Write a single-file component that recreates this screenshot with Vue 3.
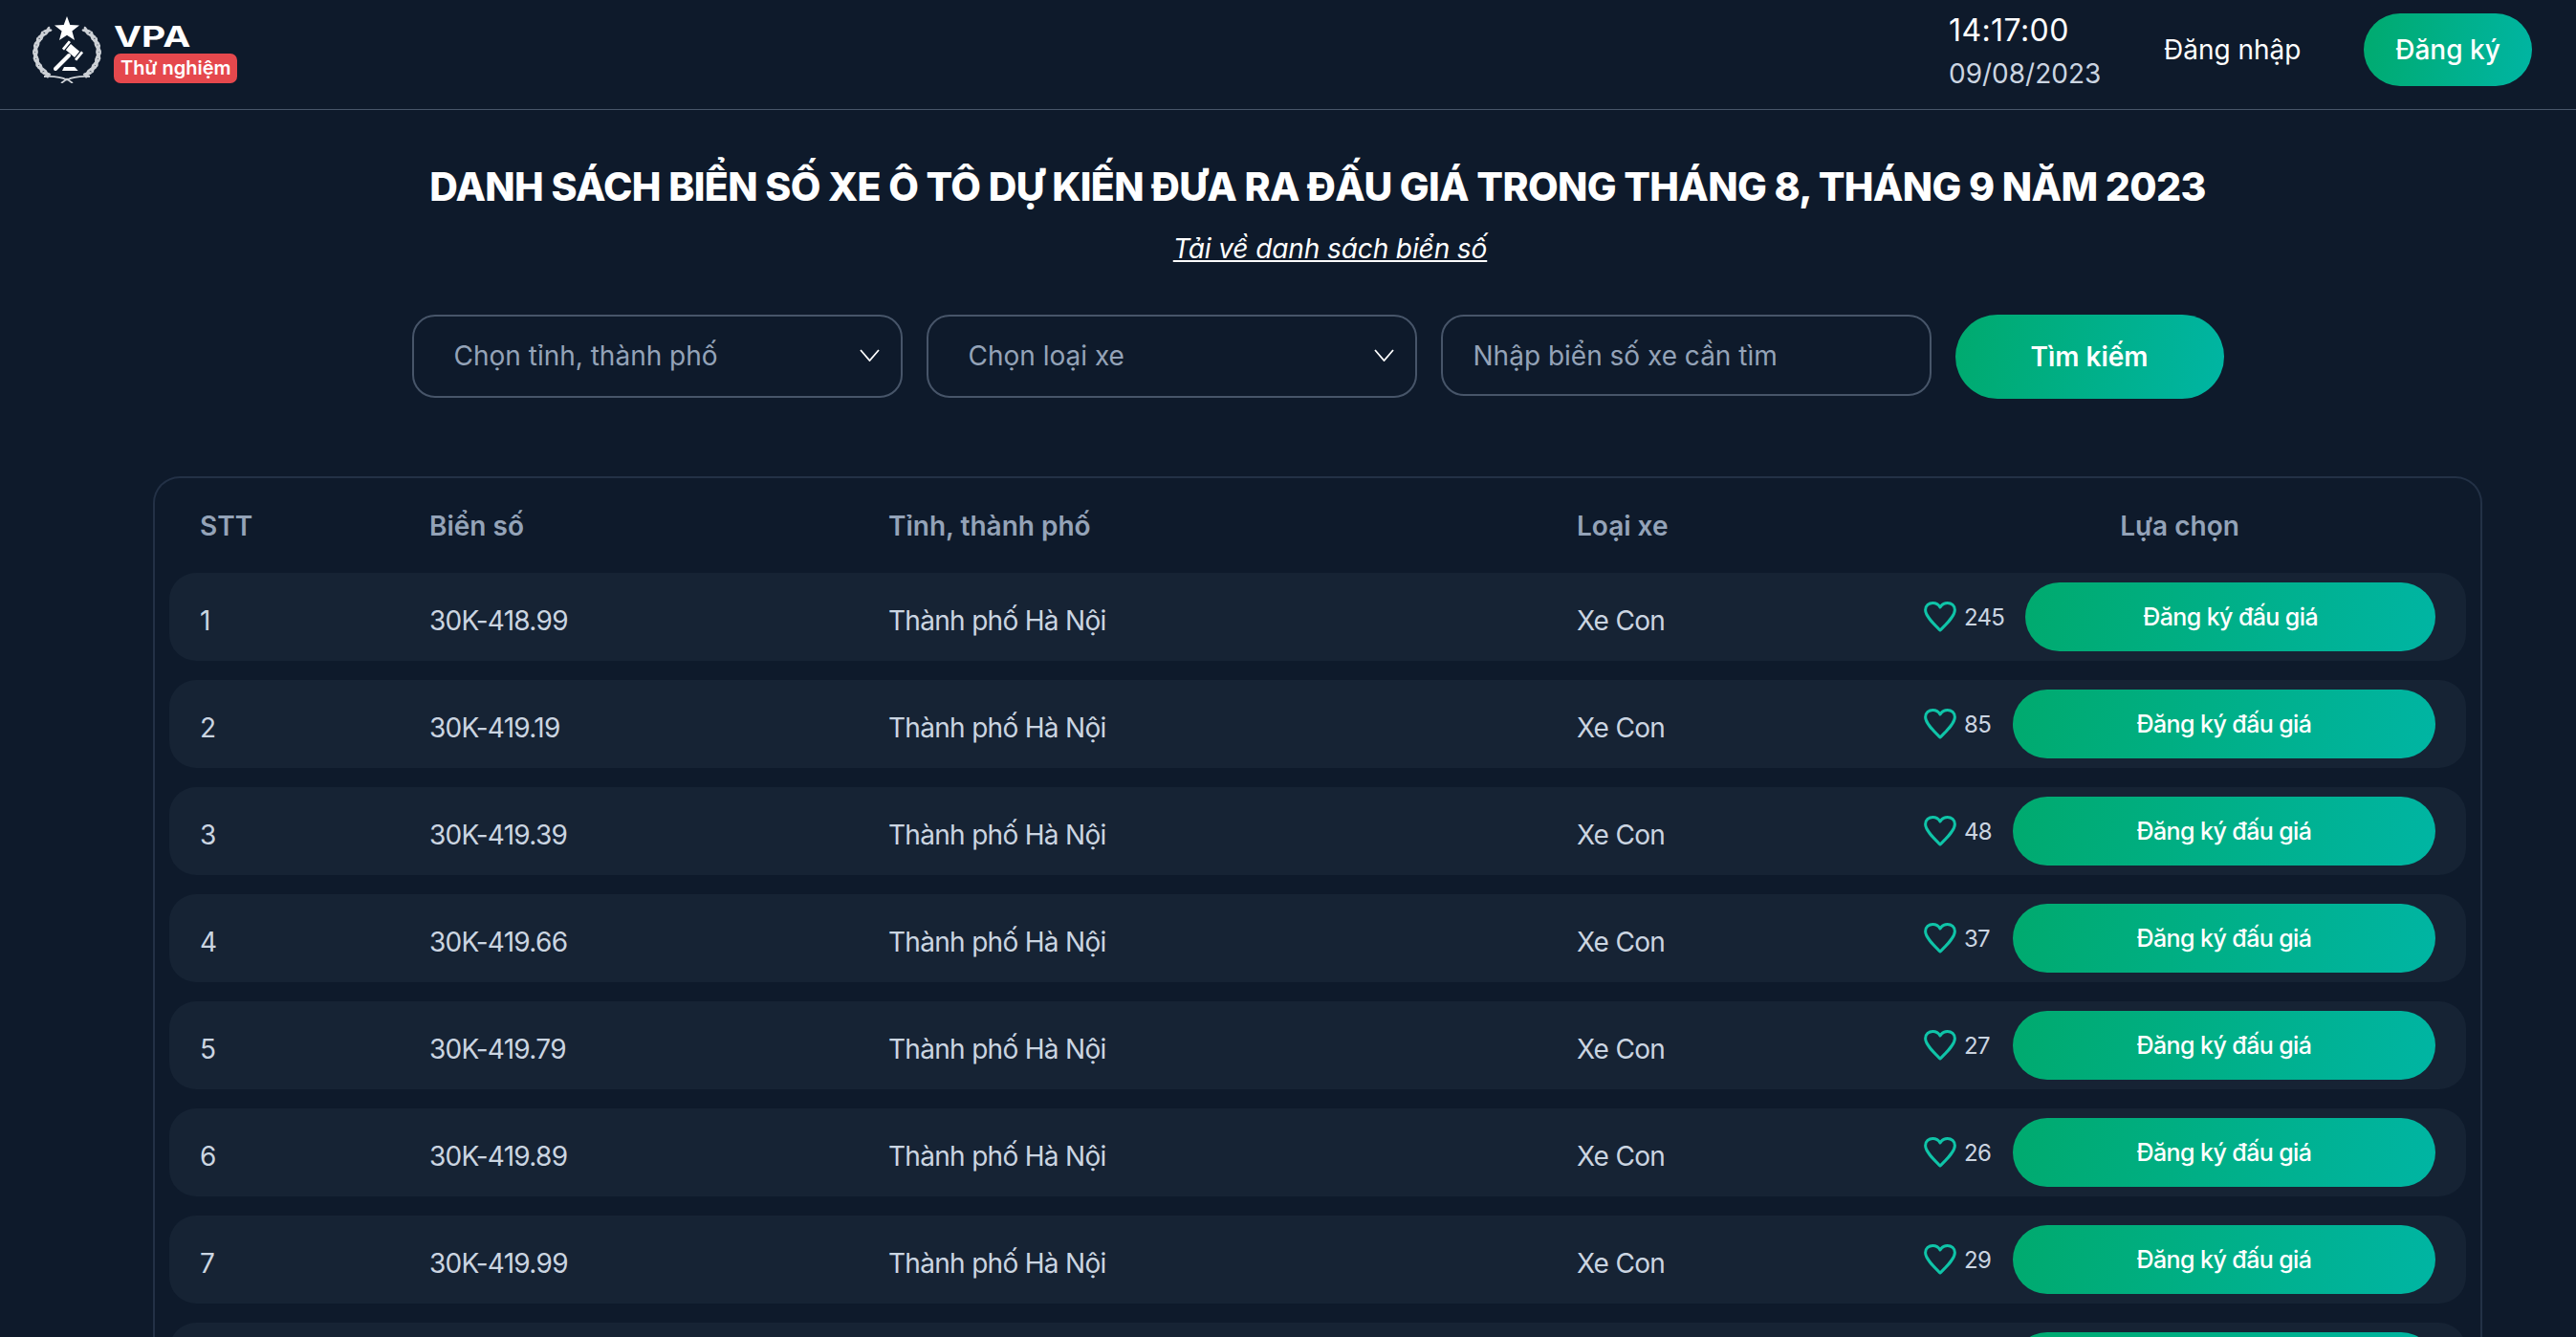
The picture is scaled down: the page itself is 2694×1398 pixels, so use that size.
<script setup>
const rows = [
  { n: 1, plate: '30K-418.99', likes: 245 },
  { n: 2, plate: '30K-419.19', likes: 85 },
  { n: 3, plate: '30K-419.39', likes: 48 },
  { n: 4, plate: '30K-419.66', likes: 37 },
  { n: 5, plate: '30K-419.79', likes: 27 },
  { n: 6, plate: '30K-419.89', likes: 26 },
  { n: 7, plate: '30K-419.99', likes: 29 },
]
// laurel leaves: pairs placed along the left arc of the wreath
const leaves = []
for (let i = 0; i < 8; i++) {
  const deg = 128 + i * 14.5
  const a = (deg * Math.PI) / 180
  const x = 37 + 33 * Math.cos(a)
  const y = 38 - 29 * Math.sin(a)
  const tangent = 90 - (deg - 180) // leaf axis follows the arc, tip toward the top
  leaves.push({ x: +x.toFixed(2), y: +y.toFixed(2), outer: +(tangent - 90 - 28).toFixed(1), inner: +(tangent - 90 + 28).toFixed(1) })
}
</script>

<template>
  <div class="page">
    <header class="topbar">
      <div class="brand">
        <svg class="emblem" viewBox="0 0 74 70" aria-hidden="true">
          <polygon points="37,0 40.300,9 50,9.500 42.400,15.500 45,25 37,19.700 29,25 31.600,15.500 24,9.500 33.700,9" fill="#fff" />
          <g v-for="side in ['', 'translate(74 0) scale(-1 1)']" :key="side" :transform="side" fill="#cdd1d6">
            <g v-for="(l, i) in leaves" :key="i">
              <ellipse :cx="l.x" :cy="l.y" rx="1.700" ry="4.800" :transform="`rotate(${l.outer} ${l.x} ${l.y})`" />
              <ellipse :cx="l.x" :cy="l.y" rx="1.700" ry="4.800" :transform="`rotate(${l.inner} ${l.x} ${l.y})`" />
            </g>
          </g>
          <g fill="#fff">
            <rect x="37" y="32" width="12" height="8" transform="rotate(40 43 36)" />
            <rect x="33" y="30.500" width="2.800" height="11" rx="0.500" transform="rotate(40 43 36)" />
            <rect x="50.200" y="30.500" width="2.800" height="11" rx="0.500" transform="rotate(40 43 36)" />
            <polygon points="34,53 45,53 48.700,57 32,57" />
          </g>
          <path d="M39 41 L25 55" stroke="#fff" stroke-width="4" stroke-linecap="round" fill="none" />
          <path d="M13 63 Q28 62 37 66.500 Q46 62 61 63 M31 70 L37 65.500 L43 70" fill="none" stroke="#cdd1d6" stroke-width="1.800" />
        </svg>
        <div class="brand-text">
          <div class="vpa">VPA</div>
          <div class="badge">Thử nghiệm</div>
        </div>
      </div>
      <div class="actions">
        <div class="clock">
          <div class="time">14:17:00</div>
          <div class="date">09/08/2023</div>
        </div>
        <a class="login">Đăng nhập</a>
        <button class="btn register">Đăng ký</button>
      </div>
    </header>

    <main class="content">
      <h1 class="title">DANH SÁCH BIỂN SỐ XE Ô TÔ DỰ KIẾN ĐƯA RA ĐẤU GIÁ TRONG THÁNG 8, THÁNG 9 NĂM 2023</h1>
      <a class="download">Tải về danh sách biển số</a>

      <div class="filters">
        <div class="field select">
          <span>Chọn tỉnh, thành phố</span>
          <svg class="chev" viewBox="0 0 21 13"><path d="M1 1 L10.500 12 L20 1" fill="none" stroke="#fff" stroke-width="1.800" /></svg>
        </div>
        <div class="field select">
          <span>Chọn loại xe</span>
          <svg class="chev" viewBox="0 0 21 13"><path d="M1 1 L10.500 12 L20 1" fill="none" stroke="#fff" stroke-width="1.800" /></svg>
        </div>
        <input class="field input" placeholder="Nhập biển số xe cần tìm" />
        <button class="btn search">Tìm kiếm</button>
      </div>

      <section class="table">
        <div class="grid head">
          <div>STT</div>
          <div>Biển số</div>
          <div>Tỉnh, thành phố</div>
          <div>Loại xe</div>
          <div class="center">Lựa chọn</div>
        </div>
        <div v-for="r in rows" :key="r.n" class="grid row">
          <div>{{ r.n }}</div>
          <div>{{ r.plate }}</div>
          <div>Thành phố Hà Nội</div>
          <div>Xe Con</div>
          <div class="choice">
            <div class="likes">
              <svg class="heart" viewBox="0 0 34 32"><path d="M17 30 C11 24 1.600 15.500 1.600 8.800 C1.600 4.300 5.300 1.500 9.300 1.500 C12.700 1.500 15.500 3.300 17 6 C18.500 3.300 21.300 1.500 24.700 1.500 C28.700 1.500 32.400 4.300 32.400 8.800 C32.400 15.500 23 24 17 30 Z" fill="none" stroke="#0fc4a8" stroke-width="3" stroke-linejoin="round" /></svg>
              <span class="count">{{ r.likes }}</span>
            </div>
            <button class="btn bid">Đăng ký đấu giá</button>
          </div>
        </div>
        <div class="grid row">
          <div></div><div></div><div></div><div></div>
          <div class="choice">
            <div class="likes"><span class="heart"></span><span class="count"></span></div>
            <div class="btn bid"></div>
          </div>
        </div>
      </section>
    </main>
  </div>
</template>

<style>
html, body { margin: 0; background: #0e1a2b; overflow: hidden; }
</style>

<style scoped>
.page {
  height: 1398px;
  overflow: hidden;
  background: #0e1a2b;
  color: #fff;
  font-family: Inter, "Noto Sans", sans-serif;
}
.topbar {
  height: 104px;
  border-bottom: 1px solid #475569;
  display: flex;
  align-items: center;
  justify-content: space-between;
  padding: 0 46px 10px 33px;
}
.brand { display: flex; align-items: center; gap: 12px; }
.emblem { width: 74px; height: 70px; display: block; }
.brand-text { display: flex; flex-direction: column; gap: 7px; margin-top: 10px; }
.vpa {
  font-size: 30px;
  line-height: 22px;
  font-weight: 700;
  transform: scaleX(1.3);
  transform-origin: left center;
}
.badge {
  background: #e5484d;
  border-radius: 7px;
  font-size: 20px;
  line-height: 31px;
  font-weight: 600;
  padding: 0 7px;
}
.actions { display: flex; align-items: center; }
.clock { width: 225px; margin: 4px 0 0 -2px; }
.time { font-size: 32px; line-height: 40px; letter-spacing: 0.4px; }
.date { font-size: 28px; line-height: 38px; color: #cbd5e1; margin-top: 6px; }
.login { font-size: 28px; width: 209px; }
.btn {
  border: none;
  color: #fff;
  font-family: inherit;
  background: linear-gradient(100deg, #00aa6e, #00b5a3);
}
.register { width: 176px; height: 76px; border-radius: 38px; font-size: 28px; font-weight: 500; }
.content { padding: 0 98px 0 160px; display: flex; flex-direction: column; align-items: center; }
.title {
  margin: 54px 0 0;
  font-size: 41px;
  line-height: 52px;
  font-weight: 800;
  letter-spacing: -0.65px;
  white-space: nowrap;
}
.download {
  margin: 20px 0 0 26px;
  font-size: 28px;
  line-height: 38px;
  font-style: italic;
  text-decoration: underline;
  letter-spacing: -0.1px;
}
.filters { display: flex; gap: 25px; margin-top: 50px; align-items: flex-start; }
.field {
  box-sizing: border-box;
  width: 513px;
  height: 87px;
  border: 2px solid #475569;
  border-radius: 24px;
  background: transparent;
  font-size: 28px;
  font-family: inherit;
  color: #94a3b8;
}
.select { display: flex; align-items: center; justify-content: space-between; padding: 0 22px 2px 42px; }
.chev { width: 21px; height: 13px; }
.input { height: 85px; padding: 0 32px 0; outline: none; }
.input::placeholder { color: #94a3b8; opacity: 1; }
.search { width: 281px; height: 88px; border-radius: 44px; font-size: 28px; font-weight: 600; padding-top: 1px; }
.table {
  box-sizing: border-box;
  align-self: stretch;
  margin-top: 81px;
  border: 2px solid #233146;
  border-bottom: none;
  border-radius: 28px 28px 0 0;
  padding: 0 15px;
}
.grid {
  display: grid;
  grid-template-columns: 240px 480px 720px 363px 1fr;
  padding: 0 32px;
  align-items: center;
}
.head { height: 99px; font-size: 28px; font-weight: 600; color: #94a3b8; }
.center { text-align: center; }
.row {
  height: 92px;
  margin-bottom: 20px;
  background: #162334;
  border-radius: 28px;
  font-size: 28px;
  color: #cbd5e1;
  letter-spacing: -0.7px;
}
.row > div:not(.choice) { padding-top: 7px; }
.choice { display: flex; align-items: center; gap: 22px; }
.likes { display: flex; align-items: center; gap: 8px; }
.heart { display: block; width: 34px; height: 32px; }
.count { font-size: 24px; letter-spacing: -0.7px; min-width: 29px; }
.bid { flex: 1; height: 72px; border-radius: 36px; font-size: 25px; font-weight: 500; letter-spacing: -0.6px; }
</style>
